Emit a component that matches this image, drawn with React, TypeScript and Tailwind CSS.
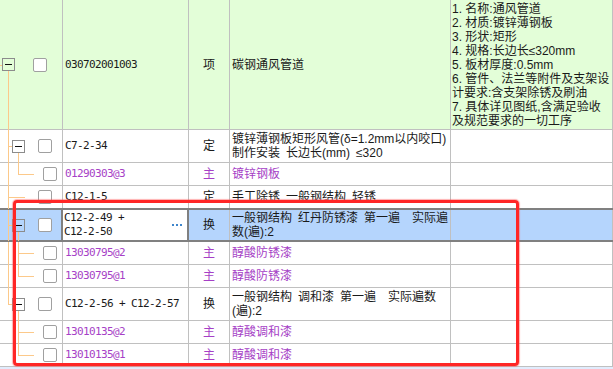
type Trunk = "full" | "half" | "start" | "none";

type Row = {
  h: string;
  level: 1 | 2 | 3;
  expand?: boolean;
  t1?: Trunk;
  t2?: Trunk;
  code: string[];
  type: string;
  desc: string[];
  spec?: string[];
  material?: boolean;
  selected?: boolean;
  bg?: string;
  noBorder?: boolean;
};

const rows: Row[] = [
  {
    h: "h-[130px]",
    level: 1,
    expand: true,
    t1: "start",
    code: ["030702001003"],
    type: "项",
    desc: ["碳钢通风管道"],
    bg: "bg-[#e3fed8]",
    spec: [
      "1. 名称:通风管道",
      "2. 材质:镀锌薄钢板",
      "3. 形状:矩形",
      "4. 规格:长边长≤320mm",
      "5. 板材厚度:0.5mm",
      "6. 管件、法兰等附件及支架设",
      "计要求:含支架除锈及刷油",
      "7. 具体详见图纸,含满足验收",
      "及规范要求的一切工序",
    ],
  },
  {
    h: "h-[33px]",
    level: 2,
    expand: true,
    t1: "full",
    t2: "start",
    code: ["C7-2-34"],
    type: "定",
    desc: ["镀锌薄钢板矩形风管(δ=1.2mm以内咬口)", "制作安装\u2002长边长(mm)\u2002≤320"],
  },
  { h: "h-[23px]", level: 3, t1: "full", t2: "half", code: ["01290303@3"], type: "主", desc: ["镀锌钢板"], material: true },
  {
    h: "h-[22px]",
    level: 2,
    t1: "full",
    code: ["C12-1-5"],
    type: "定",
    desc: ["手工除锈\u2002一般钢结构\u2002轻锈"],
    noBorder: true,
  },
  {
    h: "h-[34px]",
    level: 2,
    expand: true,
    t1: "full",
    t2: "start",
    code: ["C12-2-49 +", "C12-2-50"],
    type: "换",
    desc: ["一般钢结构\u2002红丹防锈漆\u2002第一遍\u3000实际遍", "数(遍):2"],
    selected: true,
    bg: "bg-[#b5d5fd]",
  },
  { h: "h-[23px]", level: 3, t1: "full", t2: "full", code: ["13030795@2"], type: "主", desc: ["醇酸防锈漆"], material: true },
  { h: "h-[23px]", level: 3, t1: "full", t2: "half", code: ["13030795@1"], type: "主", desc: ["醇酸防锈漆"], material: true },
  {
    h: "h-[33px]",
    level: 2,
    expand: true,
    t1: "half",
    t2: "start",
    code: ["C12-2-56 + C12-2-57"],
    type: "换",
    desc: ["一般钢结构\u2002调和漆\u2002第一遍\u3000实际遍数", "(遍):2"],
  },
  { h: "h-[23px]", level: 3, t2: "full", code: ["13010135@2"], type: "主", desc: ["醇酸调和漆"], material: true },
  { h: "h-[23px]", level: 3, t2: "half", code: ["13010135@1"], type: "主", desc: ["醇酸调和漆"], material: true },
];

const cjk = "font-['Liberation_Sans','Noto_Sans_CJK_SC',sans-serif]";
const mono = "font-['DejaVu_Sans_Mono','Noto_Sans_CJK_SC',monospace] text-[11px] tracking-[-0.62px]";
const line = "absolute bg-[#fcc98a]";

function TrunkLine({ kind, x }: { kind?: Trunk; x: string }) {
  if (kind === "full") return <span className={`${line} ${x} top-0 -bottom-px w-px`} />;
  if (kind === "half") return <span className={`${line} ${x} top-0 h-1/2 w-px`} />;
  if (kind === "start") return <span className={`${line} ${x} top-[calc(50%+6px)] -bottom-px w-px`} />;
  return null;
}

function Expander() {
  return (
    <div className="relative flex h-[13px] w-[13px] shrink-0 items-center justify-center border border-[#8c8c8c]">
      <span className="h-px w-[7px] bg-[#111]" />
    </div>
  );
}

function Check() {
  return <div className="h-[14px] w-[14px] shrink-0 rounded-[2px] border border-[#a0a0a0] bg-white" />;
}

function Tree({ row }: { row: Row }) {
  let pad = "pl-[43px]";
  if (row.level === 1) pad = "pl-[2px]";
  if (row.level === 2) pad = row.expand ? "pl-[12px]" : "pl-[38px]";
  return (
    <div className={`relative flex h-full items-center ${pad}`}>
      <TrunkLine kind={row.t1} x="left-[8px]" />
      <TrunkLine kind={row.t2} x="left-[18px]" />
      {row.level === 1 && <span className={`${line} left-0 top-1/2 h-px w-[2px]`} />}
      {row.level === 2 && (
        <span className={`${line} left-[8px] top-1/2 h-px ${row.expand ? "w-[4px]" : "w-[17px]"}`} />
      )}
      {row.level === 3 && <span className={`${line} left-[18px] top-1/2 h-px w-[16px]`} />}
      {row.expand && <Expander />}
      <div className={row.level === 1 ? "ml-[18px]" : row.expand ? "ml-[13px]" : ""}>
        <Check />
      </div>
    </div>
  );
}

function TableRow({ row }: { row: Row }) {
  const color = row.material ? "text-[#a63fc6]" : "text-[#1a1a1a]";
  const cell = "border-r border-[#c0c0c0]";
  const frame = row.selected
    ? "grid-cols-[61px_128px_41px_221px_162px] border-y-2 border-[#808080]"
    : `grid-cols-[63px_126px_41px_221px_162px] ${row.noBorder ? "" : "border-b border-[#c0c0c0]"}`;
  return (
    <div className={`grid ${frame} ${row.h} ${row.bg ?? "bg-white"}`}>
      <div className={row.selected ? "" : cell}>
        <Tree row={row} />
      </div>
      <div
        className={`flex items-center justify-between pl-[2px] pr-[5px] ${color} ${mono} leading-[14px] ${
          row.selected ? "border-x-2 border-[#808080] bg-white pl-px" : cell
        }`}
      >
        <div className="whitespace-pre">
          {row.code.map((c) => (
            <div key={c}>{c}</div>
          ))}
        </div>
        {row.selected && (
          <div className="flex gap-[2px]">
            <span className="h-[2px] w-[2px] bg-[#3f86cc]" />
            <span className="h-[2px] w-[2px] bg-[#3f86cc]" />
            <span className="h-[2px] w-[2px] bg-[#3f86cc]" />
          </div>
        )}
      </div>
      <div className={`flex items-center justify-center text-[12px] ${cjk} ${color} ${cell}`}>{row.type}</div>
      <div className={`flex flex-col justify-center overflow-hidden pl-[2px] text-[12px] leading-[14px] ${cjk} ${color} ${cell}`}>
        {row.desc.map((d) => (
          <div key={d} className="whitespace-pre">
            {d}
          </div>
        ))}
      </div>
      <div className={`flex flex-col justify-center overflow-hidden pl-[1px] text-[12px] leading-[14px] text-[#1a1a1a] ${cjk} ${cell}`}>
        {row.spec?.map((s) => (
          <div key={s} className="whitespace-pre">
            {s}
          </div>
        ))}
      </div>
    </div>
  );
}

export default function App() {
  return (
    <div className="relative h-[369px] w-[613px] overflow-hidden bg-white">
      {rows.map((r, i) => (
        <TableRow key={i} row={r} />
      ))}
      <div className="h-[10px] bg-[#e1ecfd]" />
      <div className="pointer-events-none absolute left-[13px] top-[200px] h-[166px] w-[506px] rounded-[4px] border-[3px] border-[#ff2626] shadow-[0_0_1px_1px_rgba(255,80,80,0.45)]" />
    </div>
  );
}
